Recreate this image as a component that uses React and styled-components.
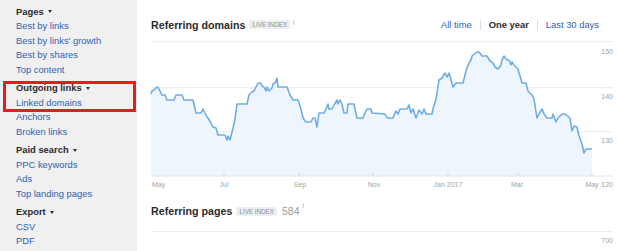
import React from 'react';
import styled, { createGlobalStyle } from 'styled-components';

const GlobalStyle = createGlobalStyle`
    html, body {
        margin: 0;
        padding: 0;
        background: #fff;
        font-family: "Liberation Sans", Arial, sans-serif;
    }
`;

const menu = [
    { title: 'Pages', links: ['Best by links', "Best by links' growth", 'Best by shares', 'Top content'] },
    { title: 'Outgoing links', links: ['Linked domains', 'Anchors', 'Broken links'], marked: true },
    { title: 'Paid search', links: ['PPC keywords', 'Ads', 'Top landing pages'] },
    { title: 'Export', links: ['CSV', 'PDF'] },
];

// page coordinates of the referring domains line, converted below
const points = [
    [151, 93], [152, 90], [154, 89], [157, 86], [158, 86], [160, 90], [162, 94], [165, 94], [167, 99],
    [174, 99], [176, 94], [182, 94], [184, 99], [193, 99], [196, 112], [201, 112], [203, 108], [205, 112],
    [207, 116], [208, 117], [211, 122], [213, 126], [216, 127], [218, 134], [225, 134], [227, 139],
    [228, 135], [230, 139], [233, 127], [235, 118], [237, 103], [247, 103], [249, 94], [252, 91],
    [254, 90], [256, 86], [258, 82], [261, 82], [262, 85], [264, 86], [266, 90], [267, 86], [269, 90],
    [272, 87], [273, 83], [275, 82], [277, 77], [278, 86], [287, 86], [290, 94], [293, 99], [298, 99],
    [301, 108], [303, 117], [306, 121], [311, 121], [313, 117], [315, 117], [317, 126], [319, 112],
    [324, 112], [326, 108], [328, 103], [329, 108], [332, 108], [334, 104], [337, 99], [338, 103],
    [340, 99], [342, 103], [344, 112], [347, 112], [348, 103], [354, 103], [357, 117], [363, 117],
    [365, 112], [367, 108], [371, 108], [372, 112], [385, 113], [387, 117], [393, 117], [396, 110],
    [398, 113], [400, 108], [407, 108], [409, 104], [411, 112], [413, 108], [416, 117], [419, 109],
    [422, 113], [424, 108], [426, 113], [432, 113], [433, 108], [436, 98], [439, 79], [442, 77],
    [445, 72], [447, 76], [449, 72], [451, 79], [453, 86], [456, 82], [463, 82], [466, 70], [468, 64],
    [471, 59], [472, 55], [477, 51], [479, 51], [482, 55], [487, 55], [490, 60], [493, 62], [495, 66],
    [498, 68], [501, 64], [502, 59], [504, 55], [507, 59], [509, 59], [511, 64], [512, 61], [514, 64],
    [518, 68], [522, 82], [526, 82], [528, 90], [532, 94], [534, 98], [537, 117], [539, 113],
    [542, 108], [544, 113], [547, 117], [552, 117], [553, 113], [556, 121], [558, 117], [562, 113],
    [565, 113], [570, 117], [572, 130], [574, 125], [577, 126], [579, 135], [582, 143], [584, 152],
    [586, 148], [588, 148], [592, 148],
].map(([x, y]) => [x - 151, y - 41]);

const axisY = 134;
const gridLines = [{ y: 45.7, label: '140' }, { y: 89.7, label: '130' }];
const yLabels = [
    { y: 12.2, label: '150' }, { y: 56.5, label: '140' }, { y: 100.5, label: '130' }, { y: 144.5, label: '120' },
];
const ticks = [73, 148, 222, 297, 367, 441];
const months = [
    { x: 1, label: 'May', anchor: 'start' }, { x: 73, label: 'Jul' }, { x: 149, label: 'Sep' },
    { x: 223, label: 'Nov' }, { x: 297, label: 'Jan 2017' }, { x: 366, label: 'Mar' }, { x: 441, label: 'May' },
];

const DomainsChart = () => {
    const line = points.map(([x, y], i) => `${i ? 'L' : 'M'}${x} ${y}`).join(' ');
    const last = points[points.length - 1];
    const area = `${line} L${last[0]} ${axisY} L0 ${axisY} Z`;

    return (
        <Chart width="462" height="150" viewBox="0 0 462 150">
            {gridLines.map((g) => (
                <line key={g.label} x1="0" x2="462" y1={g.y} y2={g.y} stroke="#ebebeb" strokeWidth="1" />
            ))}
            <path d={area} fill="#eef5fd" />
            <path d={line} fill="none" stroke="#6eaee6" strokeWidth="1.6" strokeLinejoin="round" />
            <line x1="0" x2="462" y1={axisY} y2={axisY} stroke="#e3e3e3" strokeWidth="1" />
            {ticks.map((x) => (
                <line key={x} x1={x} x2={x} y1={axisY - 3} y2={axisY} stroke="#d6d6d6" strokeWidth="1" />
            ))}
            {yLabels.map((l) => (
                <AxisText key={l.label} x="462" y={l.y} textAnchor="end">{l.label}</AxisText>
            ))}
            {months.map((m, i) => (
                <AxisText key={i} x={m.x} y="144.5" textAnchor={m.anchor || 'middle'}>{m.label}</AxisText>
            ))}
        </Chart>
    );
};

const PagesChart = () => (
    <Chart width="462" height="19" viewBox="0 0 462 19">
        <AxisText x="462" y="10.5" textAnchor="end">700</AxisText>
    </Chart>
);

export default function App() {
    return (
        <Page>
            <GlobalStyle />
            <Sidebar>
                {menu.map((group, gi) => {
                    const head = (
                        <>
                            <GroupTitle>{group.title}</GroupTitle>
                            <MenuLink>{group.links[0]}</MenuLink>
                        </>
                    );
                    return (
                        <Group key={group.title} $first={gi === 0}>
                            {group.marked ? <Marked>{head}</Marked> : head}
                            {group.links.slice(1).map((link) => (
                                <MenuLink key={link}>{link}</MenuLink>
                            ))}
                        </Group>
                    );
                })}
            </Sidebar>

            <Main>
                <SectionHeader $height={32}>
                    <Title>Referring domains</Title>
                    <Badge>LIVE INDEX</Badge>
                    <Info>i</Info>
                    <Periods>
                        <Period>All time</Period>
                        <Divider />
                        <Period $active>One year</Period>
                        <Divider />
                        <Period>Last 30 days</Period>
                    </Periods>
                </SectionHeader>
                <DomainsChart />

                <SectionHeader $height={40}>
                    <Title>Referring pages</Title>
                    <Badge>LIVE INDEX</Badge>
                    <Count>584</Count>
                    <Info>i</Info>
                </SectionHeader>
                <PagesChart />
            </Main>
        </Page>
    );
}

const Page = styled.div`
    display: flex;
    width: 617px;
    height: 251px;
    overflow: hidden;
`;

const Sidebar = styled.nav`
    width: 137px;
    flex-shrink: 0;
    box-sizing: border-box;
    padding: 4.5px 0 0 16px;
    background: #f0f0f0;
    font-size: 9.4px;
    line-height: 14.5px;
`;

const Group = styled.div`
    display: flex;
    flex-direction: column;
    margin-top: ${(p) => (p.$first ? 0 : 4)}px;
`;

const Marked = styled.div`
    position: relative;
    display: flex;
    flex-direction: column;

    &::after {
        content: '';
        position: absolute;
        left: -13px;
        right: 1px;
        top: 0;
        bottom: -2px;
        border: 3px solid #ea1a1f;
        pointer-events: none;
    }
`;

const GroupTitle = styled.div`
    display: flex;
    align-items: center;
    font-weight: bold;
    color: #2b2b2b;

    &::after {
        content: '';
        margin-left: 4px;
        border-left: 2.5px solid transparent;
        border-right: 2.5px solid transparent;
        border-top: 3px solid #333;
    }
`;

const MenuLink = styled.a`
    color: #2f5fb3;
    text-decoration: none;
    cursor: pointer;
`;

const Main = styled.main`
    flex: 1;
    display: flex;
    flex-direction: column;
    padding: 9px 4px 0 14px;
`;

const SectionHeader = styled.div`
    display: flex;
    align-items: center;
    height: ${(p) => p.$height}px;
    border-bottom: 1px solid #ececec;
`;

const Title = styled.h2`
    margin: 0;
    font-size: 10.7px;
    font-weight: bold;
    color: #2b2b2b;
`;

const Badge = styled.span`
    margin-left: 4px;
    padding: 1px 3px;
    background: #eceff2;
    border-radius: 2px;
    color: #8a8f96;
    font-size: 6.3px;
    line-height: 7px;
`;

const Count = styled.span`
    margin-left: 5px;
    color: #9a9a9a;
    font-size: 10.5px;
`;

const Info = styled.span`
    align-self: flex-start;
    margin: 10px 0 0 3px;
    color: #9a9a9a;
    font-size: 6.5px;
`;

const Periods = styled.div`
    display: flex;
    align-items: center;
    margin-left: auto;
    padding-right: 14px;
    font-size: 9.4px;
`;

const Period = styled.span`
    color: ${(p) => (p.$active ? '#2b2b2b' : '#2f5fb3')};
    font-weight: ${(p) => (p.$active ? 'bold' : 'normal')};
    cursor: pointer;
`;

const Divider = styled.span`
    width: 1px;
    height: 10px;
    margin: 0 8px;
    background: #e0e0e0;
`;

const Chart = styled.svg`
    display: block;
    overflow: visible;
`;

const AxisText = styled.text`
    font-family: "Liberation Sans", Arial, sans-serif;
    font-size: 7px;
    fill: #a3a3a3;
`;
